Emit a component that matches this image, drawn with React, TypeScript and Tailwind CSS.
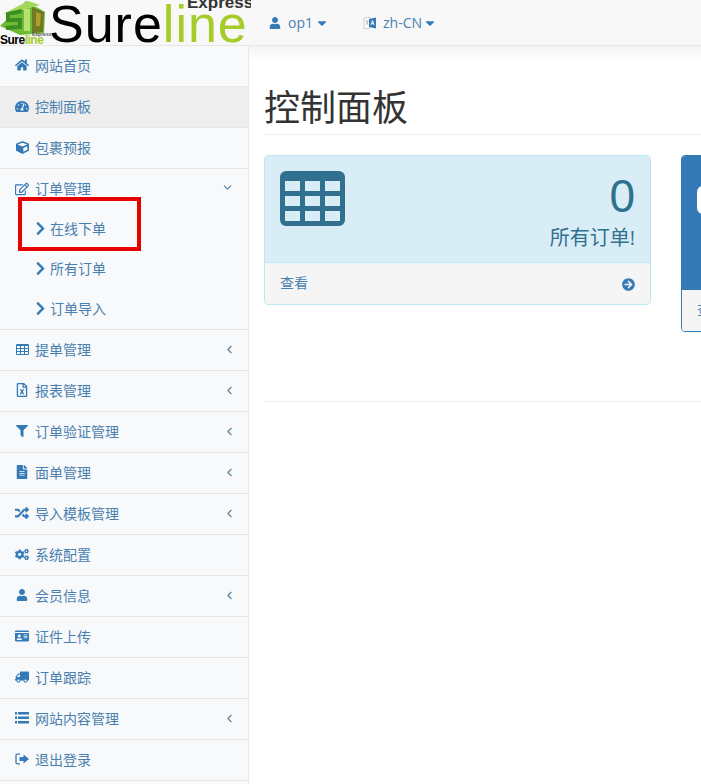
import { ReactNode } from 'react'
import {
  FaArrowCircleRight,
  FaCaretDown,
  FaChevronRight,
  FaCogs,
  FaCube,
  FaFileAlt,
  FaFilter,
  FaHome,
  FaIdCard,
  FaRandom,
  FaRegEdit,
  FaRegFileExcel,
  FaTachometerAlt,
  FaTruck,
  FaUser,
} from 'react-icons/fa'
import { FiChevronDown, FiChevronLeft } from 'react-icons/fi'

type MenuRow = {
  label: string
  icon: ReactNode
  arrow?: boolean
  active?: boolean
}

// FA4 style grid, the react-icons one only has two columns
const TableIcon = ({ className }: { className: string }) => (
  <svg viewBox="0 0 65 55" className={className}>
    <path
      fillRule="evenodd"
      fill="currentColor"
      d="M6 0H59A6 6 0 0 1 65 6V49A6 6 0 0 1 59 55H6A6 6 0 0 1 0 49V6A6 6 0 0 1 6 0ZM5 10V20H20V10ZM25 10V20H40V10ZM45 10V20H60V10ZM5 25V35H20V25ZM25 25V35H40V25ZM45 25V35H60V25ZM5 40V50H20V40ZM25 40V50H40V40ZM45 40V50H60V40Z"
    />
  </svg>
)

const ListIcon = () => (
  <svg viewBox="0 0 14 12" className="h-[12px] w-[14px]" fill="currentColor">
    <path d="M0 0H2V2.5H0ZM3 0H14V2.5H3ZM0 4.5H2V7H0ZM3 4.5H14V7H3ZM0 9H2V11.5H0ZM3 9H14V11.5H3Z" />
  </svg>
)

const SignOutIcon = () => (
  <svg viewBox="0 0 14 12" className="h-[12px] w-[14px]" fill="currentColor">
    <path d="M5 1.2H2.4A1.4 1.4 0 0 0 1 2.6V9.4A1.4 1.4 0 0 0 2.4 10.8H5" fill="none" stroke="currentColor" strokeWidth="1.3" />
    <path d="M8.5 1.5L14 6L8.5 10.5V8H4.5V4H8.5Z" />
  </svg>
)

const topRows: MenuRow[] = [
  { label: '网站首页', icon: <FaHome size={14} /> },
  { label: '控制面板', icon: <FaTachometerAlt size={15} />, active: true },
  { label: '包裹预报', icon: <FaCube size={13} /> },
]

const subRows = ['在线下单', '所有订单', '订单导入']

const bottomRows: MenuRow[] = [
  { label: '提单管理', icon: <TableIcon className="h-[11px] w-[13px]" />, arrow: true },
  { label: '报表管理', icon: <FaRegFileExcel size={14} />, arrow: true },
  { label: '订单验证管理', icon: <FaFilter size={12} />, arrow: true },
  { label: '面单管理', icon: <FaFileAlt size={14} />, arrow: true },
  { label: '导入模板管理', icon: <FaRandom size={14} />, arrow: true },
  { label: '系统配置', icon: <FaCogs size={15} /> },
  { label: '会员信息', icon: <FaUser size={12} />, arrow: true },
  { label: '证件上传', icon: <FaIdCard size={16} /> },
  { label: '订单跟踪', icon: <FaTruck size={14} className="-scale-x-100" /> },
  { label: '网站内容管理', icon: <ListIcon />, arrow: true },
  { label: '退出登录', icon: <SignOutIcon /> },
]

const Row = ({ row }: { row: MenuRow }) => (
  <div
    className={`flex h-[41px] items-center border-b border-[#e7e7e7] pb-[2px] pl-[15px] pr-[12px] ${row.active ? 'bg-[#eeeeee]' : ''}`}
  >
    <span className="flex w-[14px] shrink-0 justify-center">{row.icon}</span>
    <span className="ml-[6px] flex-1 text-[#4a80b0]">{row.label}</span>
    {row.arrow && <FiChevronLeft size={13} className="text-[#55809f]" />}
  </div>
)

const Logo = () => (
  <div className="relative h-[45px] w-[251px] shrink-0 overflow-hidden font-['Liberation_Sans',sans-serif]">
    <svg viewBox="0 0 50 36" className="absolute left-0 top-0 h-[36px] w-[50px]">
      <path d="M0 26 L26 1 L45 12 L44 33 L20 35 Z" fill="#6dbb35" />
      <path d="M3 14 L28 1 L40 5 L17 12 Z" fill="#a4d65e" />
      <path d="M22 11 L8 14 L8 20 L20 20 L20 27 L6 28" fill="none" stroke="#3c8c24" strokeWidth="4" />
      <path d="M27 9 L27 31" fill="none" stroke="#b8e070" strokeWidth="6" />
      <path d="M32 7 L44 12 L43 32 L32 33 Z" fill="#6e7a24" />
      <path d="M36 12 L41 14 L40 26 L36 26 Z" fill="#b59a2c" />
    </svg>
    <span className="absolute left-0 top-[34px] text-[12px] font-bold leading-[12px] tracking-[-0.5px] text-black">
      Sure<span className="text-[#a6cc2a]">line</span>
    </span>
    <span className="absolute left-[32px] top-[32px] text-[5px] font-bold leading-[5px] text-[#555555]">Express</span>
    <span className="absolute left-[49px] top-[-2px] text-[52px] leading-[52px] tracking-[1px] text-black">
      Sure<span className="text-[#a6cc2a]">line</span>
    </span>
    <span className="absolute left-[187px] top-[-7px] text-[17px] font-bold leading-[20px] text-[#333333]">Express</span>
  </div>
)

const LanguageIcon = () => (
  <svg viewBox="0 0 14 14" className="h-[14px] w-[14px]">
    <path d="M1 2 L7 1 L7 12 L1 13 Z" fill="#ffffff" stroke="#b8c4cf" strokeWidth="0.8" />
    <path d="M6 3 L13 1.5 L13 12.5 L6 11 Z" fill="#337ab7" />
    <path d="M8 9 L9.5 4.5 L11 9 M8.6 7.6 H10.4" fill="none" stroke="#ffffff" strokeWidth="0.9" />
    <path d="M2.5 5 H5.5 M4 4 V5 M3 9 L5.2 5.5 M3 6 L5.5 9" fill="none" stroke="#9aa7b3" strokeWidth="0.7" />
  </svg>
)

export default function App() {
  return (
    <div className="h-[784px] w-[701px] overflow-hidden bg-white font-['Open_Sans','Noto_Sans_CJK_SC',sans-serif] text-[14px] text-[#337ab7]">
      <nav className="flex h-[46px] items-center border-b border-[#e7e7e7] bg-[#f8f8f8]">
        <Logo />
        <div className="ml-[18px] flex items-center">
          <FaUser size={12} />
          <span className="ml-[7px] text-[#4a80b0]">op1</span>
          <FaCaretDown size={14} className="ml-[2px]" />
        </div>
        <div className="ml-[34px] flex items-center">
          <LanguageIcon />
          <span className="ml-[6px] text-[#4a80b0]">zh-CN</span>
          <FaCaretDown size={14} className="ml-[1px]" />
        </div>
      </nav>

      <div className="flex h-[738px]">
        <aside className="relative w-[249px] shrink-0 border-r border-[#e7e7e7] bg-[#f8f9fa]">
          {topRows.map(row => (
            <Row key={row.label} row={row} />
          ))}
          <div className="border-b border-[#e7e7e7]">
            <div className="flex h-[40px] items-center pb-[1px] pl-[15px] pr-[14px]">
              <span className="flex w-[14px] shrink-0 justify-center">
                <FaRegEdit size={14} />
              </span>
              <span className="ml-[6px] flex-1 text-[#4a80b0]">订单管理</span>
              <FiChevronDown size={13} className="mb-[2px] text-[#55809f]" />
            </div>
            {subRows.map(label => (
              <div key={label} className="flex h-[40px] items-center pb-[2px] pl-[33px]">
                <FaChevronRight size={15} />
                <span className="ml-[2px] text-[#4a80b0]">{label}</span>
              </div>
            ))}
          </div>
          {bottomRows.map(row => (
            <Row key={row.label} row={row} />
          ))}
          <div className="absolute left-[18px] top-[151px] h-[54px] w-[123px] border-4 border-[#e60000]" />
        </aside>

        <main className="min-w-0 flex-1 overflow-hidden">
          <div className="h-[14px] bg-gradient-to-b from-[#f4f4f4] to-white" />
          <div className="pl-[15px]">
            <h1 className="h-[75px] border-b border-[#eeeeee] pt-[28px] text-[36px] leading-[40px] text-[#333333]">
              控制面板
            </h1>
            <div className="mt-[20px] flex h-[247px] items-start gap-[30px] border-b border-[#eeeeee]">
              <section className="h-[150px] w-[387px] shrink-0 overflow-hidden rounded-[4px] border border-[#bce8f1]">
                <div className="flex h-[107px] justify-between border-b border-[#bce8f1] bg-[#d9edf7] px-[15px] pt-[15px] text-[#31708f]">
                  <TableIcon className="h-[55px] w-[65px]" />
                  <div className="text-right">
                    <div className="font-['Liberation_Sans',sans-serif] text-[46px] leading-[50px]">0</div>
                    <div className="mt-[3px] text-[20px] leading-[28px]">所有订单!</div>
                  </div>
                </div>
                <div className="flex h-[42px] items-center justify-between bg-[#f5f5f5] px-[15px] text-[#4a80b0]">
                  <span className="-mt-[3px]">查看</span>
                  <FaArrowCircleRight size={13} className="text-[#337ab7]" />
                </div>
              </section>
              <section className="h-[177px] w-[387px] shrink-0 overflow-hidden rounded-[4px] border border-[#337ab7]">
                <div className="h-[134px] bg-[#337ab7] px-[15px] pt-[30px]">
                  <div className="h-[28px] w-[66px] rounded-[6px] bg-white" />
                </div>
                <div className="flex h-[42px] items-center bg-[#f5f5f5] px-[15px] text-[#4a80b0]">
                  <span className="-mt-[3px]">查看</span>
                </div>
              </section>
            </div>
          </div>
        </main>
      </div>
    </div>
  )
}
